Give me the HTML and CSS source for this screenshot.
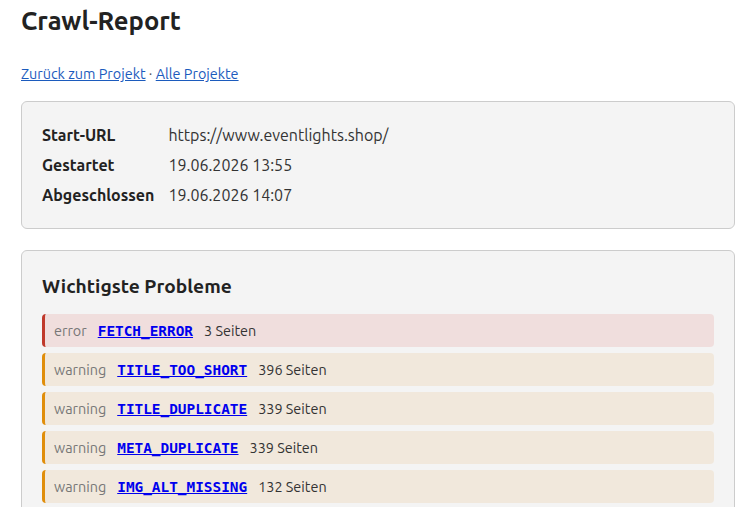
FILE: index.html
```html
<!DOCTYPE html>
<html lang="de">
<head>
    <meta charset="UTF-8">
    <meta name="viewport" content="width=device-width, initial-scale=1.0">
    <title>Crawl-Report</title>
    <link rel="stylesheet" href="styles.css">
</head>
<body>
    <h1>Crawl-Report</h1>

    <p class="nav">
        <a href="#">Zurück zum Projekt</a> · <a href="#">Alle Projekte</a>
    </p>

    <div class="card">
        <table class="meta">
            <tr><th>Start-URL</th><td>https://www.eventlights.shop/</td></tr>
            <tr><th>Gestartet</th><td>19.06.2026 13:55</td></tr>
            <tr><th>Abgeschlossen</th><td>19.06.2026 14:07</td></tr>
        </table>
    </div>

    <div class="card">
        <h2>Wichtigste Probleme</h2>
        <div class="issue error">
            <span class="sev">error</span>
            <a href="#" class="code">FETCH_ERROR</a>
            <span class="count">3 Seiten</span>
        </div>
        <div class="issue warning">
            <span class="sev">warning</span>
            <a href="#" class="code">TITLE_TOO_SHORT</a>
            <span class="count">396 Seiten</span>
        </div>
        <div class="issue warning">
            <span class="sev">warning</span>
            <a href="#" class="code">TITLE_DUPLICATE</a>
            <span class="count">339 Seiten</span>
        </div>
        <div class="issue warning">
            <span class="sev">warning</span>
            <a href="#" class="code">META_DUPLICATE</a>
            <span class="count">339 Seiten</span>
        </div>
        <div class="issue warning">
            <span class="sev">warning</span>
            <a href="#" class="code">IMG_ALT_MISSING</a>
            <span class="count">132 Seiten</span>
        </div>
    </div>
</body>
</html>
```

FILE: styles.css
```css
* {
    box-sizing: border-box;
}
body {
    margin: 0;
    padding: 0 17px 20px 21px;
    font-family: Ubuntu, "Noto Sans", sans-serif;
    color: #222;
    background: #fff;
}
h1 {
    font-size: 25.6px;
    margin: 6px 0 31px;
}
.nav {
    font-size: 14.4px;
    margin: 0 0 19px;
    color: #555;
}
.nav a {
    color: #1c5bbd;
}
.card {
    background: #f4f4f4;
    border: 1px solid #ccc;
    border-radius: 6px;
    padding: 18px 20px;
    margin-bottom: 21px;
}
.meta {
    border-collapse: collapse;
    font-size: 16px;
}
.meta th {
    text-align: left;
    font-weight: 600;
    padding: 4px 14px 4px 0;
    height: 30px;
}
.meta td {
    padding: 4px 0;
    color: #333;
}
h2 {
    font-size: 19.2px;
    margin: 6px 0 17px;
}
.issue {
    display: flex;
    align-items: center;
    gap: 11px;
    height: 33px;
    padding: 0 9px;
    margin-bottom: 6px;
    border-left: 3px solid #e08e0b;
    border-radius: 4px;
    background: #f1e8dc;
    font-size: 14.4px;
}
.issue.error {
    border-left-color: #c0392b;
    background: #f0dedd;
}
.sev {
    color: #777;
}
.code {
    font-family: "DejaVu Sans Mono", monospace;
    font-weight: bold;
    font-size: 14.4px;
    color: #0000ee;
}
.count {
    color: #333;
}
```
